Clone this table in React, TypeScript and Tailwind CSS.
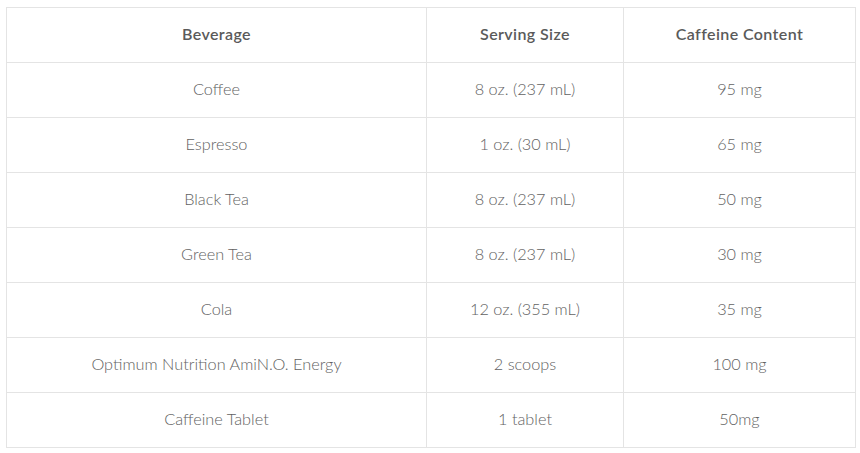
const rows = [
  ['Coffee', '8 oz. (237 mL)', '95 mg'],
  ['Espresso', '1 oz. (30 mL)', '65 mg'],
  ['Black Tea', '8 oz. (237 mL)', '50 mg'],
  ['Green Tea', '8 oz. (237 mL)', '30 mg'],
  ['Cola', '12 oz. (355 mL)', '35 mg'],
  ['Optimum Nutrition AmiN.O. Energy', '2 scoops', '100 mg'],
  ['Caffeine Tablet', '1 tablet', '50mg'],
];

export default function App() {
  return (
    <div className="w-[860px] h-[453px] bg-white pt-[7px] pl-[6px] font-['Lato',sans-serif]">
      <table className="w-[849px] border-collapse table-fixed text-center">
        <colgroup>
          <col className="w-[420px]" />
          <col className="w-[197px]" />
          <col className="w-[232px]" />
        </colgroup>
        <thead>
          <tr className="h-[55px]">
            {['Beverage', 'Serving Size', 'Caffeine Content'].map((h) => (
              <th key={h} className="border border-[#e4e4e4] pb-[2px] text-[16px] font-semibold tracking-[0.4px] text-[#5a5a5a]">
                {h}
              </th>
            ))}
          </tr>
        </thead>
        <tbody>
          {rows.map((r, i) => (
            <tr key={i} className="h-[55px]">
              {r.map((c, j) => (
                <td key={j} className="border border-[#e4e4e4] pb-[2px] text-[16.3px] font-light text-[#626262]">
                  {c}
                </td>
              ))}
            </tr>
          ))}
        </tbody>
      </table>
    </div>
  );
}
